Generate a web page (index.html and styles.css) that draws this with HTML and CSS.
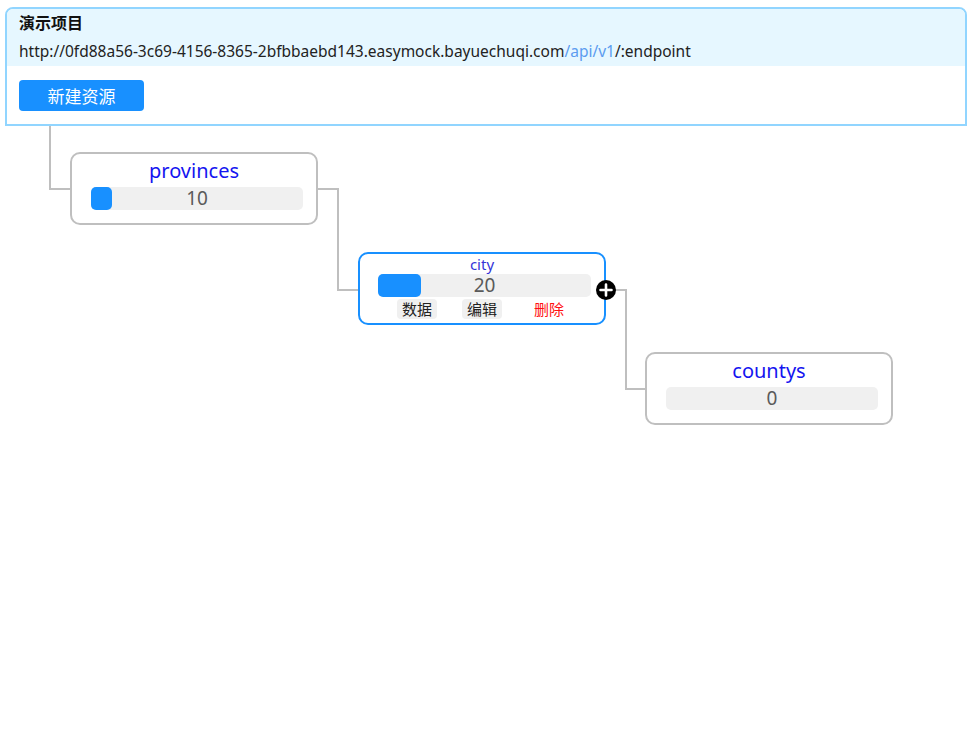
FILE: index.html
```html
<!DOCTYPE html>
<html lang="zh">
<head>
<meta charset="utf-8">
<title>演示项目</title>
<link rel="stylesheet" href="styles.css">
</head>
<body>
<div class="project">
  <div class="project-head">
    <div class="project-title">演示项目</div>
    <div class="project-url">http://0fd88a56-3c69-4156-8365-2bfbbaebd143.easymock.bayuechuqi.com<span class="url-base">/api/v1</span>/:endpoint</div>
  </div>
  <div class="project-actions">
    <button class="btn-primary">新建资源</button>
  </div>
</div>
<div class="canvas">
  <svg class="links" width="973" height="610" viewBox="0 0 973 610">
    <path d="M50 0 V63 H70" />
    <path d="M318 63 H338 V164 H358" />
    <path d="M606 164 H626 V263 H645" />
  </svg>
  <div class="node node-provinces">
    <div class="node-name">provinces</div>
    <div class="bar"><div class="bar-fill" style="width:10%"></div><span class="bar-num">10</span></div>
  </div>
  <div class="node node-city node-active">
    <div class="node-name node-name-small">city</div>
    <div class="bar"><div class="bar-fill" style="width:20%"></div><span class="bar-num">20</span></div>
    <div class="node-ops">
      <span class="op">数据</span>
      <span class="op op-edit">编辑</span>
      <span class="op op-del">删除</span>
    </div>
    <span class="add-btn">
      <svg width="20" height="20" viewBox="0 0 20 20"><circle cx="10" cy="10" r="10" fill="#000"/><path d="M10 4.5 V15.5 M4.5 10 H15.5" stroke="#fff" stroke-width="2.6" stroke-linecap="round"/></svg>
    </span>
  </div>
  <div class="node node-countys">
    <div class="node-name">countys</div>
    <div class="bar"><div class="bar-fill" style="width:0%"></div><span class="bar-num">0</span></div>
  </div>
</div>
</body>
</html>
```
FILE: styles.css
```css
* { box-sizing: border-box; }
body {
  margin: 0;
  font-family: "Noto Sans", "Noto Sans CJK SC", sans-serif;
  color: #222;
  background: #fff;
}
.project {
  margin: 7px 6px 0 5px;
  border: 2px solid #91d5ff;
  border-radius: 8px 8px 0 0;
  overflow: hidden;
}
.project-head {
  background: #e6f7ff;
  padding: 1px 12px 3px 12px;
}
.project-title {
  font-family: "Noto Sans CJK SC", sans-serif;
  font-size: 16px;
  font-weight: bold;
  line-height: 24px;
  color: #111;
}
.project-url {
  margin-top: 5px;
  font-size: 15.5px;
  line-height: 24px;
  color: #222;
}
.url-base { color: #5b9cf0; }
.project-actions {
  padding: 14px 12px 13px 12px;
}
.btn-primary {
  display: block;
  width: 125px;
  height: 31px;
  border: none;
  border-radius: 4px;
  background: #1890ff;
  color: #fff;
  font-family: "Noto Sans CJK SC", sans-serif;
  font-size: 17px;
  padding: 0;
}
.canvas {
  position: relative;
  height: 610px;
}
.links {
  position: absolute;
  left: 0;
  top: 0;
}
.links path {
  fill: none;
  stroke: #bfbfbf;
  stroke-width: 2;
}
.node {
  position: absolute;
  width: 248px;
  height: 73px;
  border: 2px solid #bfbfbf;
  border-radius: 10px;
  background: #fff;
  padding: 4px 0 0 0;
}
.node-provinces { left: 70px; top: 26px; }
.node-city { left: 358px; top: 126px; padding-top: 1px; }
.node-countys { left: 645px; top: 226px; }
.node-active { border-color: #1890ff; }
.node-name {
  text-align: center;
  font-size: 20px;
  line-height: 26px;
  color: #1414f0;
}
.node-name-small {
  font-size: 15px;
  line-height: 18px;
  color: #3535d8;
}
.bar {
  position: relative;
  margin: 3px 13px 0 19px;
  height: 23px;
  background: #f0f0f0;
  border-radius: 5px;
}
.node-city .bar { margin: 1px 13px 0 18px; }
.bar-fill {
  position: absolute;
  left: 0;
  top: 0;
  bottom: 0;
  background: #1890ff;
  border-radius: 5px;
}
.bar-num {
  position: relative;
  display: block;
  text-align: center;
  font-size: 19px;
  line-height: 23px;
  color: #5a5a5a;
}
.node-ops {
  display: flex;
  margin-top: 2px;
  padding-left: 37px;
  font-family: "Noto Sans CJK SC", sans-serif;
  font-size: 15px;
  line-height: 20px;
}
.op {
  background: #f0f0f0;
  border-radius: 4px;
  padding: 0 5px;
  color: #222;
}
.op-edit { margin-left: 25px; }
.op-del { margin-left: 27px; background: transparent; color: #ff1010; }
.add-btn {
  position: absolute;
  right: -12px;
  top: 26px;
  width: 20px;
  height: 20px;
  display: block;
}
.add-btn svg { display: block; }
```
